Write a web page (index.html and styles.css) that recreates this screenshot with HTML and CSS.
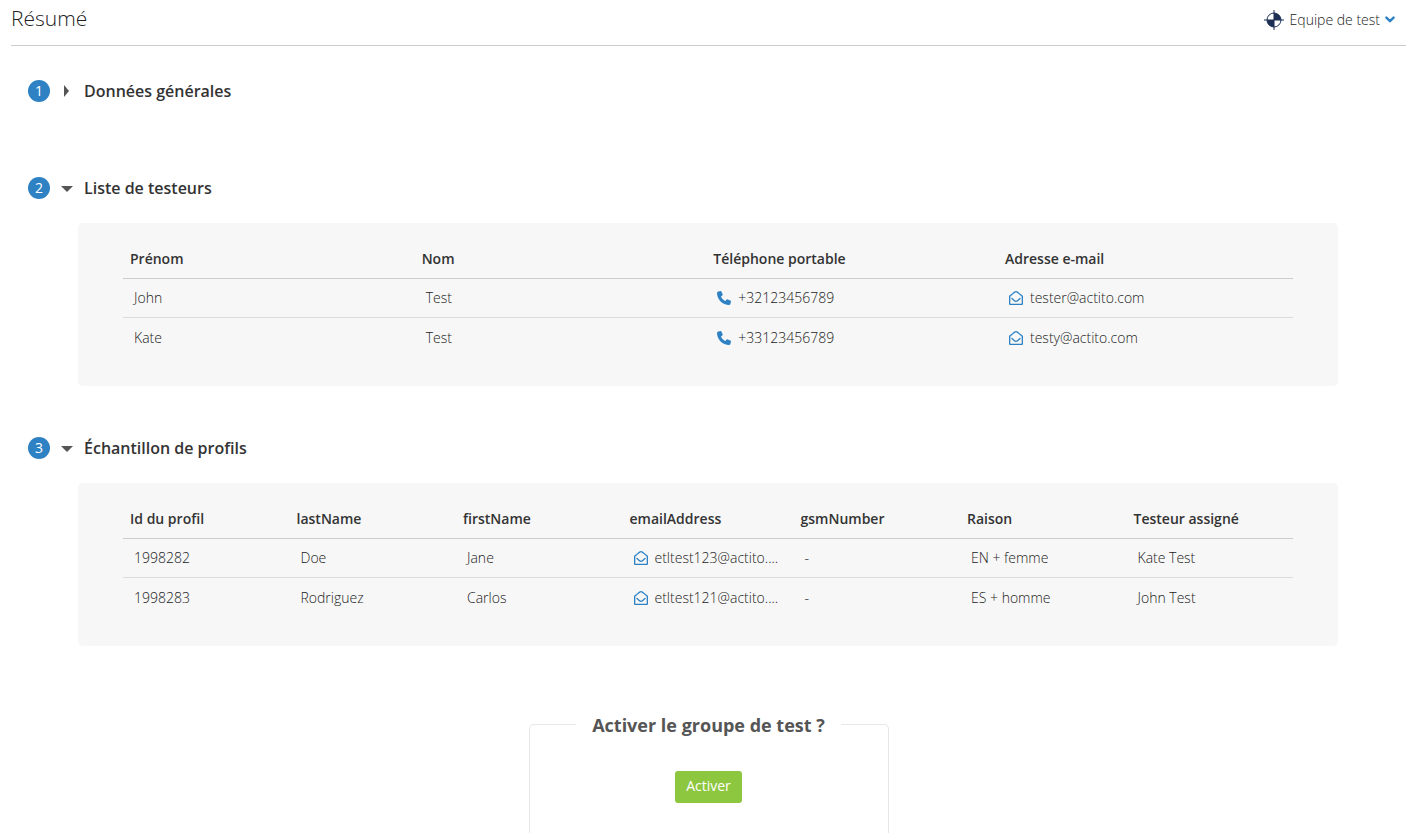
FILE: index.html
```
<!DOCTYPE html>
<html lang="fr">
<head>
  <meta charset="utf-8">
  <title>Résumé</title>
  <link rel="stylesheet" href="styles.css">
</head>
<body>

  <svg class="sprite" aria-hidden="true">
    <symbol id="phone" viewBox="0 0 512 512">
      <path d="M164.900 24.600c-7.700-18.600-28-28.500-47.400-23.200l-88 24C12.100 30.200 0 46 0 64C0 311.400 200.600 512 448 512c18 0 33.800-12.100 38.600-29.500l24-88c5.300-19.400-4.600-39.700-23.200-47.400l-96-40c-16.300-6.800-35.200-2.100-46.300 11.600L304.700 368C234.300 334.700 177.300 277.700 144 207.300L193.300 167c13.700-11.200 18.400-30 11.600-46.300l-40-96z"/>
    </symbol>
    <symbol id="mail" viewBox="0 0 512 512">
      <path d="M494.586 164.516c-4.697-3.883-111.723-89.95-135.251-108.657C337.231 38.191 299.437 0 256 0c-43.205 0-80.636 37.717-103.335 55.859-24.463 19.45-131.07 105.195-135.15 108.549A48.004 48.004 0 0 0 0 201.485V464c0 26.51 21.49 48 48 48h416c26.51 0 48-21.49 48-48V201.509a48 48 0 0 0-17.414-36.993zM464 458a6 6 0 0 1-6 6H54a6 6 0 0 1-6-6V204.347c0-1.813.816-3.526 2.226-4.665 15.87-12.814 108.793-87.554 132.364-106.293C200.755 78.88 232.398 48 256 48c23.693 0 55.857 31.369 73.41 45.389 23.573 18.741 116.503 93.493 132.366 106.316a5.99 5.99 0 0 1 2.224 4.663V458zm-31.991-187.704c4.249 5.159 3.465 12.795-1.745 16.981-28.975 23.283-59.274 47.597-70.929 56.863C336.636 362.283 299.205 400 256 400c-43.452 0-81.287-38.237-103.335-55.86-11.279-8.967-41.744-33.413-70.927-56.864-5.21-4.187-5.993-11.822-1.745-16.981l15.258-18.528c4.178-5.073 11.657-5.843 16.779-1.726 28.618 23.001 58.566 47.035 70.56 56.571C200.143 320.631 232.307 352 256 352c23.602 0 55.246-30.88 73.41-45.389 11.994-9.535 41.944-33.57 70.563-56.568 5.122-4.116 12.601-3.346 16.778 1.727l15.258 18.526z"/>
    </symbol>
  </svg>

  <header class="page-header">
    <h1>Résumé</h1>
    <button type="button" class="team-menu">
      <svg class="team-icon" viewBox="0 0 20 20">
        <circle cx="10" cy="10" r="7" fill="#fff" stroke="#1c2f55"/>
        <path d="M10 10V3a7 7 0 0 1 7 7zM10 10v7a7 7 0 0 1-7-7z" fill="#1c2f55"/>
        <path d="M10 0v20M0 10h20" stroke="#1c2f55"/>
      </svg>
      <span>Equipe de test</span>
      <svg class="chevron" viewBox="0 0 10 10">
        <path d="M2 3l3 3 3-3" fill="none" stroke="#2e82c4" stroke-width="2" stroke-linecap="round" stroke-linejoin="round"/>
      </svg>
    </button>
  </header>

  <main>
    <section>
      <button type="button" class="section-head" aria-expanded="false">
        <span class="badge">1</span>
        <svg class="caret" viewBox="0 0 12 12"><path d="M3 0l5 6-5 6z"/></svg>
        <span class="section-title">Données générales</span>
      </button>
    </section>

    <section>
      <button type="button" class="section-head" aria-expanded="true">
        <span class="badge">2</span>
        <svg class="caret" viewBox="0 0 12 12"><path d="M0 4h12l-6 6z"/></svg>
        <span class="section-title">Liste de testeurs</span>
      </button>
      <div class="panel">
        <table class="testers">
          <thead>
            <tr>
              <th>Prénom</th>
              <th>Nom</th>
              <th>Téléphone portable</th>
              <th class="col-email">Adresse e-mail</th>
            </tr>
          </thead>
          <tbody>
            <tr>
              <td>John</td>
              <td>Test</td>
              <td><svg class="icon"><use href="#phone"/></svg>+32123456789</td>
              <td><svg class="icon"><use href="#mail"/></svg>tester@actito.com</td>
            </tr>
            <tr>
              <td>Kate</td>
              <td>Test</td>
              <td><svg class="icon"><use href="#phone"/></svg>+33123456789</td>
              <td><svg class="icon"><use href="#mail"/></svg>testy@actito.com</td>
            </tr>
          </tbody>
        </table>
      </div>
    </section>

    <section>
      <button type="button" class="section-head" aria-expanded="true">
        <span class="badge">3</span>
        <svg class="caret" viewBox="0 0 12 12"><path d="M0 4h12l-6 6z"/></svg>
        <span class="section-title">Échantillon de profils</span>
      </button>
      <div class="panel">
        <table class="profiles">
          <thead>
            <tr>
              <th>Id du profil</th>
              <th>lastName</th>
              <th>firstName</th>
              <th class="col-email">emailAddress</th>
              <th>gsmNumber</th>
              <th>Raison</th>
              <th>Testeur assigné</th>
            </tr>
          </thead>
          <tbody>
            <tr>
              <td>1998282</td>
              <td>Doe</td>
              <td>Jane</td>
              <td><svg class="icon"><use href="#mail"/></svg>etltest123@actito....</td>
              <td>-</td>
              <td>EN + femme</td>
              <td>Kate Test</td>
            </tr>
            <tr>
              <td>1998283</td>
              <td>Rodriguez</td>
              <td>Carlos</td>
              <td><svg class="icon"><use href="#mail"/></svg>etltest121@actito....</td>
              <td>-</td>
              <td>ES + homme</td>
              <td>John Test</td>
            </tr>
          </tbody>
        </table>
      </div>
    </section>
  </main>

  <fieldset class="activate">
    <legend>Activer le groupe de test ?</legend>
    <button type="button" class="activate-btn">Activer</button>
  </fieldset>

</body>
</html>
```
FILE: styles.css
```
* {
  box-sizing: border-box;
}

body {
  display: flex;
  flex-direction: column;
  min-height: 100vh;
  margin: 0;
  padding: 0 13px 0 11px;
  font-family: "Open Sans", sans-serif;
  font-size: 14px;
  line-height: 20px;
  color: #555;
  background-color: #fff;
}

button {
  padding: 0;
  border: none;
  background: none;
  font: inherit;
  color: inherit;
  cursor: pointer;
}

.sprite {
  display: none;
}

.page-header {
  display: flex;
  justify-content: space-between;
  align-items: center;
  height: 46px;
  padding: 0 10px 10px 0;
  border-bottom: 1px solid #ccc;
}

h1 {
  margin: 0;
  font-size: 21px;
  font-weight: 300;
  color: #222;
}

.team-menu {
  display: flex;
  align-items: center;
  padding-top: 4px;
  font-weight: 300;
  color: #222;
}

.team-icon {
  width: 20px;
  height: 20px;
  margin-right: 6px;
}

.chevron {
  width: 12px;
  height: 12px;
  margin-left: 4px;
}

main {
  display: flex;
  flex-direction: column;
  gap: 51px;
  padding: 34px 68px 0 17px;
}

.section-head {
  display: flex;
  align-items: center;
  height: 22px;
  margin-bottom: 24px;
}

.badge {
  width: 22px;
  height: 22px;
  border-radius: 50%;
  line-height: 22px;
  text-align: center;
  color: #fff;
  background-color: #2e82c4;
}

.caret {
  width: 12px;
  height: 12px;
  margin: 0 11px;
  fill: #555;
}

.section-title {
  font-size: 16px;
  font-weight: 600;
  color: #333;
}

.panel {
  margin-left: 50px;
  padding: 16px 45px 28px;
  border-radius: 5px;
  background-color: #f7f7f7;
}

table {
  width: 100%;
  table-layout: fixed;
  border-spacing: 0;
}

th {
  height: 40px;
  padding: 0 7px;
  border-bottom: 1px solid #ccc;
  font-weight: 600;
  text-align: left;
  color: #333;
}

td {
  height: 39px;
  padding: 0 11px;
  border-bottom: 1px solid #ddd;
  font-weight: 300;
  color: #222;
  white-space: nowrap;
}

tbody tr:last-child td {
  height: 40px;
  border-bottom: none;
}

.testers .col-email {
  width: 295px;
}

.profiles .col-email {
  width: 171px;
}

.icon {
  width: 14px;
  height: 14px;
  margin-right: 7px;
  vertical-align: -2px;
  fill: #2e82c4;
}

.activate {
  flex: 1;
  width: 360px;
  margin: 65px auto 0;
  padding: 34px 0 30px;
  border: 1px solid #e7e7e7;
  border-bottom: none;
  border-radius: 5px 5px 0 0;
  text-align: center;
}

.activate legend {
  margin: 0 auto;
  padding: 2px 16px 0;
  font-size: 18px;
  font-weight: 700;
  line-height: 24px;
}

.activate-btn {
  height: 32px;
  padding: 0 11px 2px;
  border-radius: 3px;
  color: #fff;
  background-color: #8dc63f;
}
```
